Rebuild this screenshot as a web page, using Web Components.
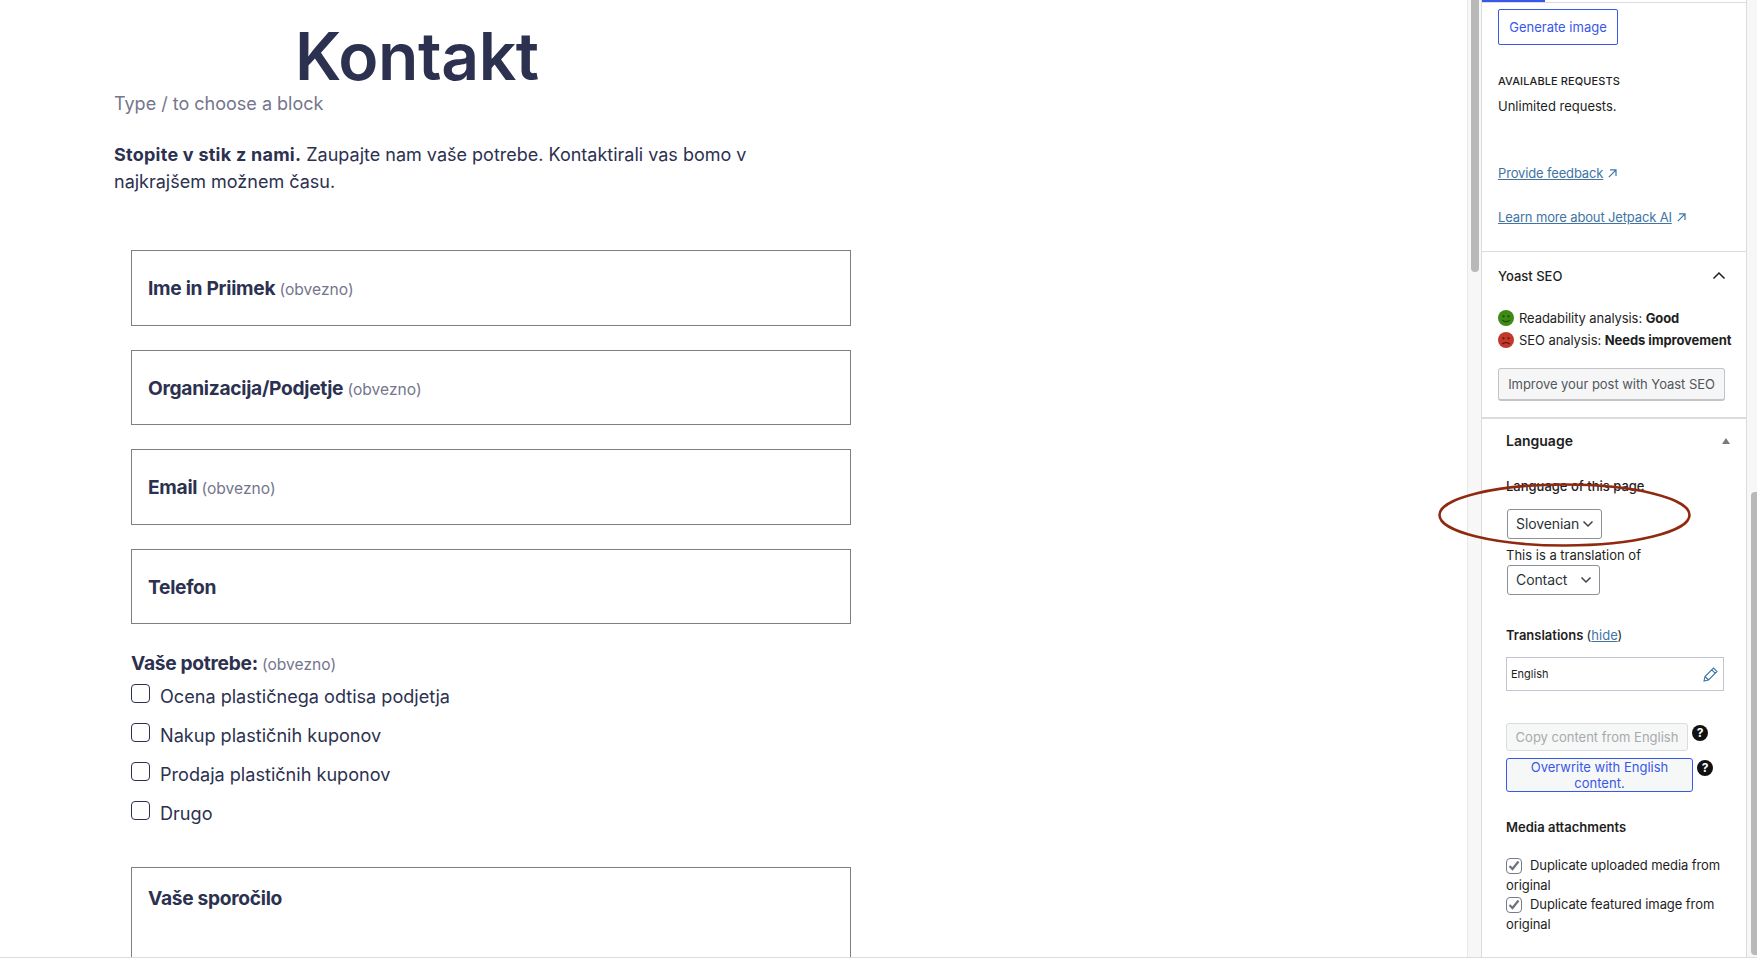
<!DOCTYPE html>
<html>
<head>
<meta charset="utf-8">
<title>Kontakt</title>
<style>
  html, body { margin: 0; height: 100%; background: #fff; overflow: hidden; }
  body { font-family: Inter, "Liberation Sans", sans-serif; }
</style>
</head>
<body>
<edit-screen>
  <editor-canvas slot="editor"></editor-canvas>
  <edit-sidebar slot="sidebar"></edit-sidebar>
</edit-screen>

<script>
// icons used in several places
const CHEVRON = '<svg width="12" height="8" viewBox="0 0 12 8" fill="none" stroke="#3c434a" stroke-width="1.5"><path d="M1.5 1.5 6 6l4.5-4.5"/></svg>';
const EXT = '<svg width="9" height="9" viewBox="0 0 9 9" fill="none" stroke="#3f74a3" stroke-width="1.2"><path d="M.8 8.2 7.8 1.2M2 .9h6v6"/></svg>';
const TICK = '<svg width="12" height="11" viewBox="0 0 12 11" fill="none" stroke="#6d7280" stroke-width="2.2"><path d="M1.5 6 4.5 9 10.5 1.5"/></svg>';

class EditScreen extends HTMLElement {
  constructor() {
    super();
    this.attachShadow({ mode: 'open' });
    this.shadowRoot.innerHTML = `
      <style>
        :host { display: block; height: 964px; position: relative; overflow: hidden; }
        .wrap { display: flex; height: 957px; border-bottom: 1px solid #dcdcde; }
        .main { width: 1467px; overflow: hidden; }
        .track { width: 14px; box-sizing: border-box; background: #f7f7f7; border-left: 1px solid #e8e8e8; padding: 0 2px 0 3px; }
        .thumb { height: 272px; background: #b9b9b9; border-radius: 0 0 4px 4px; }
        .side { width: 266px; box-sizing: border-box; border-left: 1px solid #dcdcde; border-right: 1px solid #dcdcde; overflow: hidden; }
        .track2 { width: 10px; box-sizing: border-box; background: #f7f7f7; padding: 492px 0 2px 4px; }
        .thumb2 { height: 463px; background: #b9b9b9; border-radius: 4px 0 0 4px; }
        /* the hand drawn mark lies over the sidebar and its gutter */
        .oval { position: absolute; left: 1438px; top: 483px; overflow: visible; }
      </style>
      <div class="wrap">
        <div class="main"><slot name="editor"></slot></div>
        <div class="track"><div class="thumb"></div></div>
        <div class="side"><slot name="sidebar"></slot></div>
        <div class="track2"><div class="thumb2"></div></div>
      </div>
      <svg class="oval" width="253" height="64" viewBox="0 0 253 64"><ellipse cx="126.5" cy="32" rx="125" ry="30.5" fill="none" stroke="#8f2a10" stroke-width="2.6"/></svg>
    `;
  }
}

class FormField extends HTMLElement {
  constructor() {
    super();
    this.attachShadow({ mode: 'open' });
    this.shadowRoot.innerHTML = `
      <style>
        :host { display: block; box-sizing: border-box; width: 720px; height: 75.5px; border: 1px solid #7f7f7f; padding: 22px 16px 0; margin-bottom: 24px; color: #2c3150; }
        :host([tall]) { height: 150px; margin: 0; padding-top: 15px; }
        .l { font-size: 19.2px; line-height: 30px; font-weight: 700; letter-spacing: -0.3px; }
        .o { font-size: 15.6px; font-weight: 400; color: #74768c; letter-spacing: 0; }
      </style>
      <div class="l"><slot></slot> ${this.hasAttribute('req') ? '<span class="o">(obvezno)</span>' : ''}</div>
    `;
  }
}

class FormCheck extends HTMLElement {
  constructor() {
    super();
    this.attachShadow({ mode: 'open' });
    this.shadowRoot.innerHTML = `
      <style>
        :host { display: flex; height: 39px; color: #2c3150; font-size: 18.1px; }
        .b { width: 19px; height: 19px; box-sizing: border-box; border: 1px solid #2c3150; border-radius: 4px; }
        .t { margin-left: 10px; margin-top: -1px; line-height: 26px; }
      </style>
      <div class="b"></div><div class="t"><slot></slot></div>
    `;
  }
}

class EditorCanvas extends HTMLElement {
  constructor() {
    super();
    this.attachShadow({ mode: 'open' });
    this.shadowRoot.innerHTML = `
      <style>
        :host { display: block; padding: 0 0 0 114px; color: #2c3150; }
        h1 { margin: 0 0 0 181px; font-size: 66px; line-height: 80px; padding-top: 16px; font-weight: 600; letter-spacing: -0.45px; height: 80px; }
        .ph { font-size: 18px; line-height: 27px; color: #74768c; margin-top: -6px; }
        p { font-size: 18px; line-height: 27px; margin: 24px 0 0; width: 640px; }
        p b { letter-spacing: 0.25px; }
        .form { margin: 55px 0 0 17px; }
        .need { font-size: 19.2px; line-height: 26px; font-weight: 700; letter-spacing: -0.3px; margin: 26px 0 6px; }
        .need span { font-size: 15.6px; font-weight: 400; color: #74768c; letter-spacing: 0; }
        .list { height: 183px; }
      </style>
      <h1>Kontakt</h1>
      <div class="ph">Type / to choose a block</div>
      <p><b>Stopite v stik z nami.</b> Zaupajte nam vaše potrebe. Kontaktirali vas bomo v najkrajšem možnem času.</p>
      <div class="form">
        <form-field req>Ime in Priimek</form-field>
        <form-field req>Organizacija/Podjetje</form-field>
        <form-field req>Email</form-field>
        <form-field>Telefon</form-field>
        <div class="need">Vaše potrebe: <span>(obvezno)</span></div>
        <div class="list">
          <form-check>Ocena plastičnega odtisa podjetja</form-check>
          <form-check>Nakup plastičnih kuponov</form-check>
          <form-check>Prodaja plastičnih kuponov</form-check>
          <form-check>Drugo</form-check>
        </div>
        <form-field tall>Vaše sporočilo</form-field>
      </div>
    `;
  }
}

class EditSidebar extends HTMLElement {
  constructor() {
    super();
    this.attachShadow({ mode: 'open' });
    this.shadowRoot.innerHTML = `
      <style>
        :host { display: block; font-size: 13px; line-height: 20px; color: #1e1e1e; }
        a { color: #3f74a3; text-decoration: underline; }
        .tab { width: 63px; height: 3px; background: #3858e9; }
        .ai { border-top: 1px solid #dcdcde; margin-top: -1px; padding: 6px 16px 0; height: 249px; box-sizing: border-box; }
        .gen { width: 120px; height: 36px; box-sizing: border-box; border: 1px solid #3858e9; border-radius: 2px; color: #3858e9; display: flex; align-items: center; justify-content: center; }
        .cap { font-size: 11px; font-weight: 500; margin-top: 28px; line-height: 16px; letter-spacing: 0.1px; }
        .un { margin-top: 7px; }
        .lnk { display: flex; gap: 5px; align-items: center; letter-spacing: -0.15px; }
        .yoast { border-top: 1px solid #dcdcde; padding: 0 16px; height: 166px; box-sizing: border-box; }
        .yh { display: flex; justify-content: space-between; align-items: center; height: 48px; margin-bottom: 7px; font-weight: 500; padding-right: 4px; }
        .yh svg { margin-top: -2px; }
        .st { display: flex; align-items: center; gap: 5px; height: 22px; white-space: nowrap; letter-spacing: -0.08px; }
        .st svg { flex: none; }
        .st b { font-weight: 700; }
        .imp { margin-top: 17px; width: 227px; height: 33px; box-sizing: border-box; background: #f6f6f6; border: 1px solid #c3c4c7; border-bottom-width: 2px; border-radius: 3px; color: #50575e; display: flex; align-items: center; justify-content: center; white-space: nowrap; letter-spacing: -0.05px; }
        .lang { border-top: 2px solid #dcdcde; padding: 0 10px 0 24px; }
        .lh { display: flex; justify-content: space-between; align-items: center; height: 44px; font-size: 14px; font-weight: 600; padding-right: 6px; }
        .tri { width: 0; height: 0; border: 4px solid transparent; border-top: 0; border-bottom: 6px solid #787c82; }
        .sl { margin-top: 13px; font-weight: 500; line-height: 20px; }
        .sel { box-sizing: border-box; height: 30px; margin-left: 1px; border: 1px solid #8c8f94; border-radius: 3px; display: flex; align-items: center; justify-content: space-between; padding: 0 7px 0 8px; font-size: 14px; color: #2c3338; letter-spacing: -0.1px; }
        .tr { margin-top: 7px; line-height: 18px; }
        .ts { margin-top: 30px; font-weight: 600; }
        .ts span { font-weight: 400; }
        .en { margin-top: 12px; width: 218px; height: 34px; box-sizing: border-box; border: 1px solid #c3c4d0; display: flex; align-items: center; justify-content: space-between; padding: 0 5px 0 4px; font-size: 11px; }
        .bt { display: flex; gap: 4px; align-items: flex-start; }
        .cp { width: 182px; height: 28px; box-sizing: border-box; background: #f6f7f7; border: 1px solid #dcdcde; border-radius: 3px; color: #a7aaad; display: flex; align-items: center; justify-content: center; white-space: nowrap; }
        .ov { width: 187px; height: 34px; box-sizing: border-box; background: #f6f7f7; border: 1px solid #3858e9; border-radius: 3px; color: #3858e9; text-align: center; line-height: 16px; }
        .q { width: 16px; height: 16px; margin-top: 2px; border-radius: 50%; background: #111; color: #fff; font-size: 12px; font-weight: 700; line-height: 16px; text-align: center; }
        .ma { margin-top: 25px; font-weight: 600; }
        .ck { line-height: 20px; letter-spacing: -0.08px; }
        .ck i { display: inline-flex; vertical-align: -1px; width: 16px; height: 16px; box-sizing: border-box; border: 1px solid #787c82; border-radius: 4px; margin-right: 8px; align-items: center; justify-content: center; }
      </style>
      <div class="tab"></div>
      <div class="ai">
        <div class="gen">Generate image</div>
        <div class="cap">AVAILABLE REQUESTS</div>
        <div class="un">Unlimited requests.</div>
        <div class="lnk" style="margin-top:47px"><a>Provide feedback</a>${EXT}</div>
        <div class="lnk" style="margin-top:24px"><a>Learn more about Jetpack AI</a>${EXT}</div>
      </div>
      <div class="yoast">
        <div class="yh"><span>Yoast SEO</span><svg width="14" height="9" viewBox="0 0 14 9" fill="none" stroke="#1e1e1e" stroke-width="1.5"><path d="M1.5 7.5 7 2l5.5 5.5"/></svg></div>
        <div class="st"><svg width="16" height="16" viewBox="0 0 16 16"><circle cx="8" cy="8" r="8" fill="#3f8a14"/><circle cx="5.5" cy="6.3" r="1.1" fill="#1d4a06"/><circle cx="10.5" cy="6.3" r="1.1" fill="#1d4a06"/><path d="M4.3 10c1.6 2.2 5.8 2.2 7.4 0" fill="none" stroke="#1d4a06" stroke-width="1.2"/></svg><span>Readability analysis: <b>Good</b></span></div>
        <div class="st"><svg width="16" height="16" viewBox="0 0 16 16"><circle cx="8" cy="8" r="8" fill="#c0392b"/><circle cx="5.5" cy="6.3" r="1.1" fill="#66120a"/><circle cx="10.5" cy="6.3" r="1.1" fill="#66120a"/><path d="M4.3 12.2c1.6-2.2 5.8-2.2 7.4 0" fill="none" stroke="#66120a" stroke-width="1.2"/></svg><span>SEO analysis: <b>Needs improvement</b></span></div>
        <div class="imp">Improve your post with Yoast SEO</div>
      </div>
      <div class="lang">
        <div class="lh"><span>Language</span><span class="tri"></span></div>
        <div class="sl">Language of this page</div>
        <div class="sel" style="width:95px;margin-top:13px">Slovenian ${CHEVRON}</div>
        <div class="tr">This is a translation of</div>
        <div class="sel" style="width:93px;margin-top:1px">Contact ${CHEVRON}</div>
        <div class="ts">Translations <span>(<a>hide</a>)</span></div>
        <div class="en"><span>English</span><svg width="15" height="15" viewBox="0 0 15 15" fill="none" stroke="#3f74a3" stroke-width="1.1"><path d="M1 14l1-4.5L10.5 1l3.5 3.5L5.5 13z M8.8 2.8l3.5 3.5 M2 9.5 5.5 13"/></svg></div>
        <div class="bt" style="margin-top:32px"><div class="cp">Copy content from English</div><div class="q">?</div></div>
        <div class="bt" style="margin-top:7px"><div class="ov">Overwrite with English content.</div><div class="q">?</div></div>
        <div class="ma">Media attachments</div>
        <div class="ck" style="margin-top:18px"><i>${TICK}</i>Duplicate uploaded media from original</div>
        <div class="ck" style="margin-top:-1px"><i>${TICK}</i>Duplicate featured image from original</div>
      </div>
    `;
  }
}

customElements.define('edit-screen', EditScreen);
customElements.define('form-field', FormField);
customElements.define('form-check', FormCheck);
customElements.define('editor-canvas', EditorCanvas);
customElements.define('edit-sidebar', EditSidebar);
</script>
</body>
</html>
